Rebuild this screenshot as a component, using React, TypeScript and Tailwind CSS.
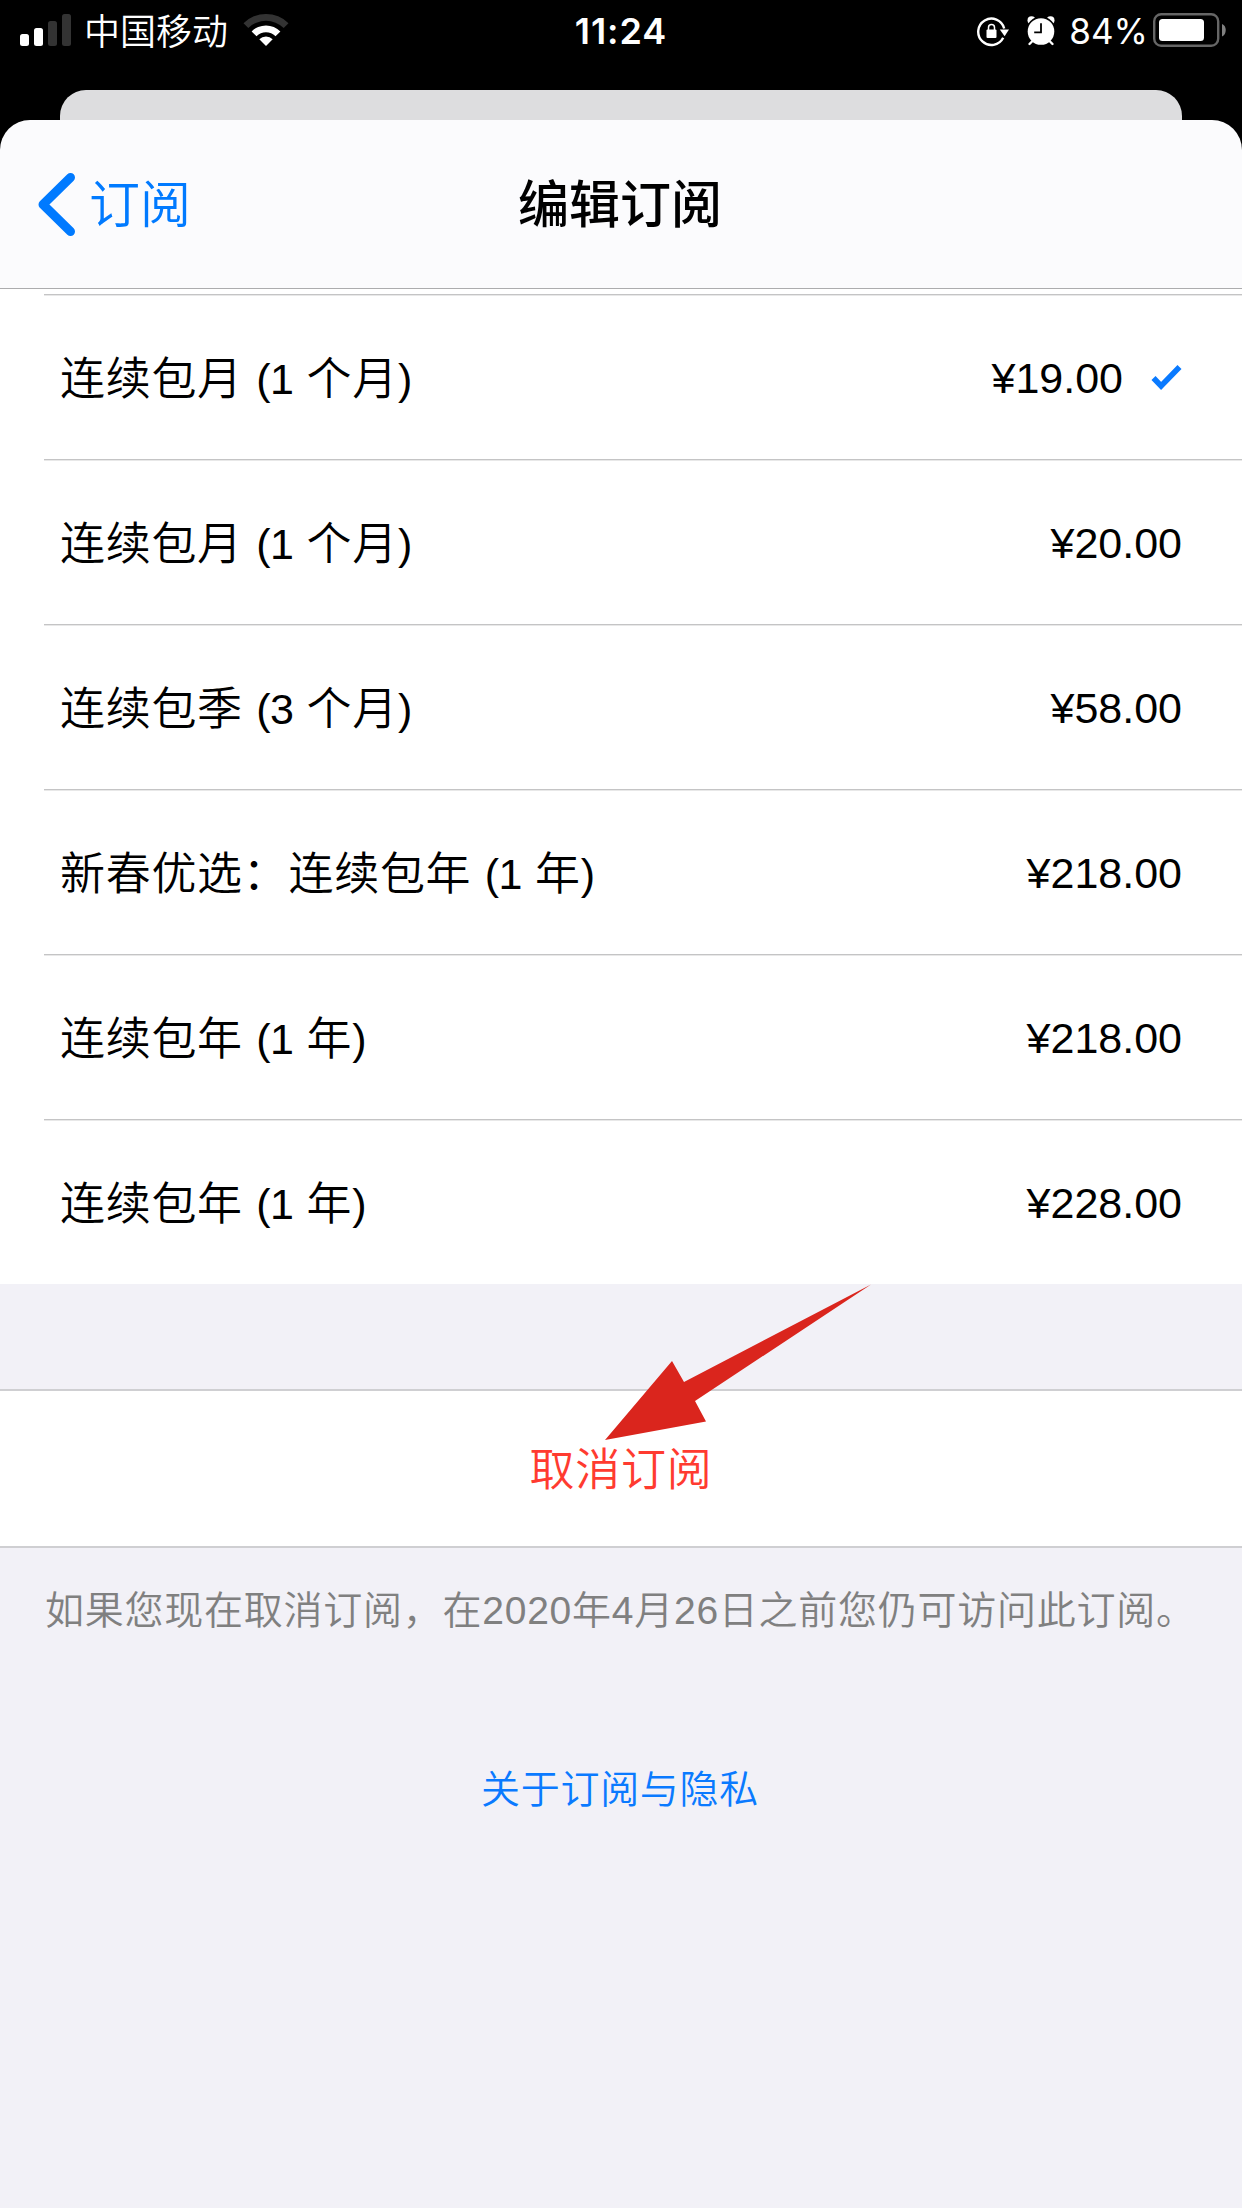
/**
 * Subscription edit screen
 * Card sheet with the available plans and the cancel action
 */

interface Plan {
  name: string;
  price: string;
  selected?: boolean;
}

const PLANS: Plan[] = [
  { name: '连续包月 (1 个月)', price: '¥19.00', selected: true },
  { name: '连续包月 (1 个月)', price: '¥20.00' },
  { name: '连续包季 (3 个月)', price: '¥58.00' },
  { name: '新春优选：连续包年 (1 年)', price: '¥218.00' },
  { name: '连续包年 (1 年)', price: '¥218.00' },
  { name: '连续包年 (1 年)', price: '¥228.00' },
];

function SignalIcon() {
  return (
    <svg width="52" height="34" viewBox="0 0 52 34" fill="#fff">
      <rect x="0" y="20" width="9" height="12" rx="2.5" />
      <rect x="14" y="14" width="9" height="18" rx="2.5" />
      <rect x="28" y="7" width="9" height="25" rx="2.5" fill="#333" />
      <rect x="42" y="0" width="9" height="32" rx="2.5" fill="#333" />
    </svg>
  );
}

function WifiIcon() {
  return (
    <svg width="46" height="34" viewBox="0 0 46 34" fill="#fff">
      <path d="M0.5 10.2a32 32 0 0 1 45 0l-4.8 4.8a25.4 25.4 0 0 0-35.4 0z" fill="#333" />
      <path d="M8.6 18.4a20.4 20.4 0 0 1 28.8 0l-4.9 4.8a13.6 13.6 0 0 0-19 0z" />
      <path d="M16.3 26.2a9.6 9.6 0 0 1 13.4 0L23 33z" />
    </svg>
  );
}

function RotationLockIcon() {
  return (
    <svg width="32" height="30" viewBox="0 0 32 30" fill="none">
      <path d="M26.2 20.8A13.2 13.2 0 1 1 27.2 11.5" stroke="#fff" strokeWidth="2.4" />
      <path d="M22.8 12.4h9.2l-4.4 6.8z" fill="#fff" />
      <rect x="9.5" y="12.5" width="10" height="8.5" rx="1" fill="#fff" />
      <path d="M11.5 13v-2.6a3 3 0 0 1 6 0V13" stroke="#fff" strokeWidth="1.5" />
    </svg>
  );
}

function AlarmIcon() {
  return (
    <svg width="28" height="30" viewBox="0 0 28 30" fill="none">
      <circle cx="4.5" cy="4.2" r="4" fill="#fff" />
      <circle cx="23.5" cy="4.2" r="4" fill="#fff" />
      <circle cx="14" cy="15.5" r="15" fill="#000" />
      <path d="M5 25.5l-2.5 2.5M23 25.5l2.5 2.5" stroke="#fff" strokeWidth="2.4" strokeLinecap="round" />
      <circle cx="14" cy="15.5" r="13.3" fill="#fff" />
      <path d="M14 7.2v9.2H7.2" stroke="#000" strokeWidth="1.8" />
    </svg>
  );
}

function BatteryIcon() {
  return (
    <svg width="74" height="35" viewBox="0 0 74 35" fill="none">
      <rect x="1.2" y="1.2" width="64" height="31.6" rx="7" stroke="#666" strokeWidth="2.4" />
      <rect x="6" y="6" width="45" height="22" rx="3.5" fill="#fff" />
      <path d="M69 11c5 1.6 5 10.6 0 12.4z" fill="#808080" />
    </svg>
  );
}

function StatusBar() {
  return (
    <header className="grid h-[90px] shrink-0 grid-cols-[1fr_auto_1fr] items-start text-white">
      <div className="flex pt-[13px] pl-5">
        <div className="pt-px">
          <SignalIcon />
        </div>
        <span className="ml-3 pt-0.5 text-[36px] leading-[36px] font-[350]">中国移动</span>
        <div className="ml-[15px]">
          <WifiIcon />
        </div>
      </div>
      <span className="pt-[13px] font-['Inter'] text-[36px] leading-[36px] font-semibold tracking-[0.9px]">11:24</span>
      <div className="flex justify-end pt-[13px] pr-[15px]">
        <div className="pt-1">
          <RotationLockIcon />
        </div>
        <div className="ml-[18px] pt-[3px]">
          <AlarmIcon />
        </div>
        <span className="ml-[14px] font-['Inter'] text-[35px] leading-[37px]">84%</span>
        <div className="ml-[5px]">
          <BatteryIcon />
        </div>
      </div>
    </header>
  );
}

function NavBar() {
  return (
    <nav className="grid h-[169px] shrink-0 grid-cols-[1fr_auto_1fr] items-center rounded-t-[30px] border-b border-[#acacae] bg-[#fbfbfd]">
      <button className="flex items-center pl-[38px] text-[#007aff]">
        <svg width="38" height="64" viewBox="0 0 38 64" fill="none">
          <path d="M32.5 5.5L5 32.5l27.5 27" stroke="#007aff" strokeWidth="9" strokeLinecap="round" strokeLinejoin="round" />
        </svg>
        <span className="ml-[13px] pt-1 text-[51px] leading-[52px] font-[350]">订阅</span>
      </button>
      <h1 className="pt-1 pr-0.5 text-[51px] leading-[52px] font-medium">编辑订阅</h1>
    </nav>
  );
}

// Digits and brackets run slightly smaller than the Chinese text
function PlanName({ name }: { name: string }) {
  return (
    <span className="grow pt-1 text-[45px] leading-[60px] font-[350] tracking-[0.7px] whitespace-pre">
      {name.split(/([ -~]+)/).map((part, i) =>
        i % 2 ? (
          <span key={i} className="align-[1px] text-[43px] tracking-[-0.6px] [word-spacing:2px]">{part}</span>
        ) : (
          part
        )
      )}
    </span>
  );
}

function PlanRow({ plan }: { plan: Plan }) {
  return (
    <li className="ml-11 flex h-[165px] items-center border-t border-[#c4c4c5] pr-[60px] pl-4 shadow-[inset_0_1px_0_#e8e8e8]">
      <PlanName name={plan.name} />
      <span className="pt-px text-[43px] leading-[60px]">{plan.price}</span>
      {plan.selected && (
        <svg className="ml-7" width="31" height="27" viewBox="0 0 31 27" fill="none">
          <path d="M2.5 14l7.6 8L28.5 3" stroke="#0a7aff" strokeWidth="5.6" />
        </svg>
      )}
    </li>
  );
}

export default function App() {
  return (
    <div
      lang="zh-CN"
      className="relative flex h-[2208px] w-[1242px] flex-col overflow-hidden bg-black font-['Liberation_Sans','Noto_Sans_CJK_SC',sans-serif] text-black"
    >
      <StatusBar />
      {/* Edge of the card underneath */}
      <div className="mx-[60px] h-[30px] shrink-0 rounded-t-[26px] bg-[#dddddf]" />
      <NavBar />

      <main className="grow bg-[#f2f1f7]">
        <ul className="bg-white pt-[5px]">
          {PLANS.map((plan, i) => (
            <PlanRow key={i} plan={plan} />
          ))}
        </ul>

        <button className="mt-[105px] flex h-[159px] w-full items-center justify-center border-y-2 border-[#cfcfd2] bg-white pt-1 text-[45px] leading-[60px] font-[350] tracking-[0.7px] text-[#ff3b30]">
          取消订阅
        </button>
        <p className="mt-[33px] pl-[45px] text-[39px] leading-[60px] font-[350] tracking-[0.75px] whitespace-nowrap text-[#808080]">
          如果您现在取消订阅，在2020年4月26日之前您仍可访问此订阅。
        </p>
        <a className="mt-[119px] block pr-0.5 text-center text-[39px] leading-[60px] font-[350] tracking-[0.7px] text-[#0a7aff]">
          关于订阅与隐私
        </a>
      </main>

      {/* Pointer to the cancel button */}
      <svg className="absolute top-[1284px] left-[605px]" width="267" height="157" viewBox="0 0 267 157">
        <path d="M0 156L67 77l12 21L266 0.5 90 117l11 20.500z" fill="#da251d" />
      </svg>
    </div>
  );
}
